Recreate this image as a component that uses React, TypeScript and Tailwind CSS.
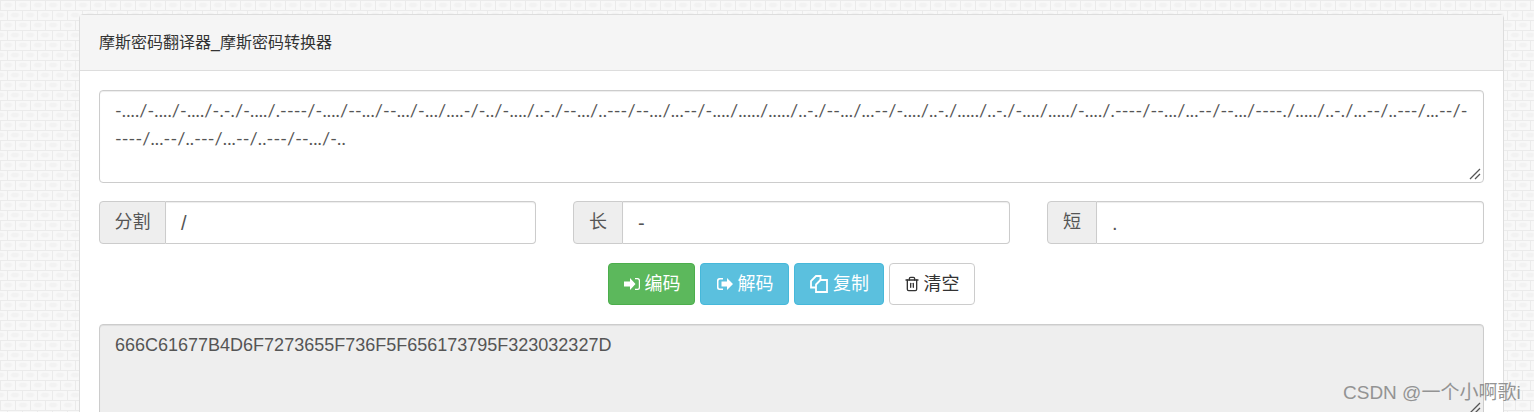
import React from 'react';
import { Trash2 } from 'lucide-react';

const morse =
  '-..../-..../-..../-.-./-..../.----/-..../--.../--.../-.../....-/-../-..../..-./--.../..---/--.../...--/-..../...../...../..-./--.../...--/-..../..-./...../..-./-..../...../-..../.----/--.../...--/--.../----./...../..-./...--/..---/...--/-----/...--/..---/...--/..---/--.../-..';

// brick wallpaper: 15x10 bricks, every other row shifted by half a brick
const bricks =
  'bg-[#f8f8f8] bg-[linear-gradient(#ebebeb_1px,transparent_1px),conic-gradient(at_1px_10px,transparent_0_270deg,#ebebeb_270deg_360deg),conic-gradient(at_1px_10px,transparent_0_270deg,#ebebeb_270deg_360deg),radial-gradient(ellipse_5px_3px_at_8px_5px,#f2f2f2_60%,transparent),radial-gradient(ellipse_5px_3px_at_8px_5px,#f2f2f2_60%,transparent)] bg-[length:15px_10px,15px_20px,15px_20px,15px_20px,15px_20px] bg-[position:0_0,0_0,7px_10px,0_0,7px_10px]';

const SignIn = () => (
  <svg viewBox="0 0 16 14" className="h-[14px] w-[16px]" fill="currentColor">
    <path d="M0 4.500h6V1l5.500 6L6 13V9.500H0z" />
    <path d="M11 1h2.500A2.500 2.500 0 0 1 16 3.500v7a2.500 2.500 0 0 1-2.500 2.500H11v-1.200h2.300a1.500 1.500 0 0 0 1.500-1.500V3.700a1.500 1.500 0 0 0-1.500-1.500H11z" />
  </svg>
);

const SignOut = () => (
  <svg viewBox="0 0 16 14" className="h-[14px] w-[16px]" fill="currentColor">
    <path d="M6 1H2.500A2.500 2.500 0 0 0 0 3.500v7A2.500 2.500 0 0 0 2.500 13H6v-1.500H3A1.500 1.500 0 0 1 1.500 10V4A1.500 1.500 0 0 1 3 2.500h3z" />
    <path d="M4.500 4.500h5.500V1l6 6-6 6V9.500H4.500z" />
  </svg>
);

const Copy = () => (
  <svg viewBox="0 0 18 18" className="h-[18px] w-[18px]" fill="none" stroke="currentColor" strokeWidth="1.800">
    <path d="M6 12.500H1V6l5-5h4.500v4" />
    <path d="M6 9.500L10.500 5H17v12H6z" />
  </svg>
);

const AddonInput = ({ label, value, labelWidth }: { label: string; value: string; labelWidth: string }) => (
  <div className="flex h-[43px] w-[437px]">
    <span className={`flex items-center justify-center rounded-l border border-[#ccc] bg-[#eee] text-[18px] text-[#555] ${labelWidth}`}>
      {label}
    </span>
    <div className="flex flex-1 items-center rounded-r border border-l-0 border-[#ccc] bg-white pl-[15px] text-[20px] text-[#555] shadow-[inset_0_1px_1px_rgba(0,0,0,0.075)]">
      {value}
    </div>
  </div>
);

const Grip = () => (
  <svg viewBox="0 0 12 12" className="absolute bottom-[2px] right-[2px] h-3 w-3" stroke="#555" strokeWidth="1.300">
    <path d="M1 11L11 1M6 11l5-5" />
  </svg>
);

export default function App() {
  return (
    <div className={`h-[412px] overflow-hidden pl-[79px] pr-[30px] pt-[14px] font-['Liberation_Sans','Noto_Sans_CJK_SC',sans-serif] ${bricks}`}>
      <div className="h-[420px] rounded-t border border-[#ddd] bg-white">
        <div className="flex h-[56px] items-center border-b border-[#ddd] bg-[#f5f5f5] pl-[19px] text-[16px] text-[#333]">
          摩斯密码翻译器_摩斯密码转换器
        </div>
        <div className="px-[19px] pt-[19px]">
          <div className="relative h-[93px] rounded border border-[#ccc] bg-white px-[15px] py-[5px] font-['Lato',sans-serif] text-[18px] leading-[28px] tracking-[0.12px] text-[#555] shadow-[inset_0_1px_1px_rgba(0,0,0,0.075)]">
            {morse}
            <Grip />
          </div>
          <div className="mt-[18px] flex justify-between">
            <AddonInput label="分割" value="/" labelWidth="w-[67px]" />
            <AddonInput label="长" value="-" labelWidth="w-[50px]" />
            <AddonInput label="短" value="." labelWidth="w-[50px]" />
          </div>
          <div className="mt-[19px] flex justify-center gap-[5px] pr-[1px]">
            <button className="flex h-[42px] w-[87px] items-center justify-center gap-[5px] rounded border border-[#4cae4c] bg-[#5cb85c] pl-[2px] text-[18px] text-white">
              <SignIn />
              编码
            </button>
            <button className="flex h-[42px] w-[89px] items-center justify-center gap-[5px] rounded border border-[#46b8da] bg-[#5bc0de] pl-[2px] text-[18px] text-white">
              <SignOut />
              解码
            </button>
            <button className="flex h-[42px] w-[90px] items-center justify-center gap-[5px] rounded border border-[#46b8da] bg-[#5bc0de] pl-[2px] text-[18px] text-white">
              <Copy />
              复制
            </button>
            <button className="flex h-[42px] w-[86px] items-center justify-center gap-[4px] rounded border border-[#ccc] bg-white text-[18px] text-[#333]">
              <Trash2 size={16} />
              清空
            </button>
          </div>
          <div className="relative mt-[19px] h-[93px] rounded border border-[#ccc] bg-[#eee] px-[15px] py-[7px] text-[18px] leading-[26px] text-[#555] shadow-[inset_0_1px_1px_rgba(0,0,0,0.075)]">
            666C61677B4D6F7273655F736F5F656173795F323032327D
            <Grip />
          </div>
        </div>
      </div>
      <div className="absolute left-[1343px] top-[382px] text-[19px] leading-[22px] text-[#8a8a8a] opacity-90">
        CSDN @一个小啊歌i
      </div>
    </div>
  );
}
